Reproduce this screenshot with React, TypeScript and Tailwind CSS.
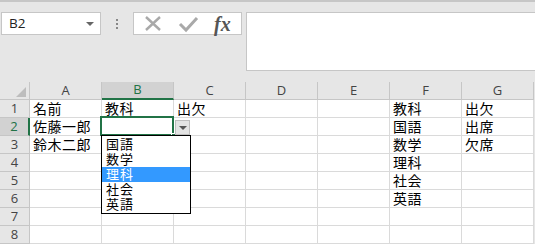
import React from "react";

const COLS = ["A", "B", "C", "D", "E", "F", "G"];

const CELLS: Record<string, string> = {
  A1: "名前",
  B1: "教科",
  C1: "出欠",
  F1: "教科",
  G1: "出欠",
  A2: "佐藤一郎",
  F2: "国語",
  G2: "出席",
  A3: "鈴木二郎",
  F3: "数学",
  G3: "欠席",
  F4: "理科",
  F5: "社会",
  F6: "英語",
};

const OPTIONS = ["国語", "数学", "理科", "社会", "英語"];

const jp = "font-['Liberation_Sans','Noto_Sans_CJK_JP',sans-serif]";
const ui = "font-['Open_Sans','Liberation_Sans',sans-serif]";

function FormulaBar() {
  return (
    <div className="flex h-[82px] items-start border-t-2 border-[#c6c6c6] pt-[10px]">
      <div className="ml-[1px] flex h-[23px] w-[100px] items-center justify-between border border-[#c6c6c6] bg-white pl-[7px] pr-[6px]">
        <span className={`${ui} text-[13.5px] text-[#222]`}>B2</span>
        <span className="h-0 w-0 border-x-[4px] border-t-[4px] border-x-transparent border-t-[#666]" />
      </div>
      <div className="flex h-[23px] w-[32px] flex-col items-center justify-center gap-[2px]">
        <span className="h-[2px] w-[2px] bg-[#888]" />
        <span className="h-[2px] w-[2px] bg-[#888]" />
        <span className="h-[2px] w-[2px] bg-[#888]" />
      </div>
      <div className="flex h-[23px] w-[109px] items-center border border-[#c6c6c6] bg-white">
        <svg width="36" height="21" viewBox="0 0 36 21" className="ml-[2px]">
          <path d="M10 4 L24 17 M24 4 L10 17" stroke="#a9a9a9" strokeWidth="2.4" fill="none" />
        </svg>
        <svg width="36" height="21" viewBox="0 0 36 21">
          <path d="M8 11 L14 17 L25 5" stroke="#a9a9a9" strokeWidth="3" fill="none" />
        </svg>
        <span className="ml-[6px] font-['Liberation_Serif',serif] text-[20px] font-bold italic leading-none text-[#555]">
          fx
        </span>
      </div>
      <div className="ml-[4px] h-[59px] flex-1 border border-r-0 border-[#c6c6c6] bg-white" />
    </div>
  );
}

function Sheet() {
  const rows = [1, 2, 3, 4, 5, 6, 7, 8];
  return (
    <div className="relative">
      <div className="flex h-[18px] bg-[#e6e6e6]">
        <div className="flex w-[30px] shrink-0 items-end justify-end border-r border-b border-[#c6c6c6] pb-[2px] pr-[3px]">
          <svg width="10" height="10" viewBox="0 0 10 10">
            <path d="M10 0 L10 10 L0 10 Z" fill="#bdbdbd" />
          </svg>
        </div>
        {COLS.map((c) => (
          <div
            key={c}
            className={`${ui} flex w-[72px] shrink-0 items-center justify-center text-[13px] ${
              c === "B"
                ? "border-b-2 border-r border-[#217346] border-r-[#c6c6c6] bg-[#d2d2d2] text-[#217346]"
                : "border-b border-r border-[#c6c6c6] text-[#444]"
            }`}
          >
            {c}
          </div>
        ))}
      </div>
      {rows.map((r) => (
        <div key={r} className="flex h-[18px]">
          <div
            className={`${ui} flex w-[30px] shrink-0 items-center justify-center text-[13px] ${
              r === 2
                ? "border-r-2 border-b border-[#217346] border-b-[#c6c6c6] bg-[#d2d2d2] text-[#217346]"
                : "border-r border-b border-[#c6c6c6] bg-[#e6e6e6] text-[#444]"
            }`}
          >
            {r}
          </div>
          {COLS.map((c) => (
            <div
              key={c}
              className={`${jp} w-[72px] shrink-0 whitespace-nowrap border-r border-b border-[#dadada] bg-white pl-[3px] pt-[1px] text-[14px] leading-[17px] tracking-[0.5px] text-black`}
            >
              {CELLS[c + r] ?? ""}
            </div>
          ))}
        </div>
      ))}

      {/* active cell B2 */}
      <div className="absolute left-[100px] top-[34px] h-[20px] w-[74px] border-2 border-[#217346]">
        <span className="absolute -bottom-[4px] -right-[4px] h-[5px] w-[5px] border border-white bg-[#217346]" />
      </div>

      {/* validation arrow */}
      <div className="absolute left-[175px] top-[38px] flex h-[15px] w-[15px] items-center justify-center border border-[#bdbdbd] bg-[#e3e3e3]">
        <span className="h-0 w-0 border-x-[4px] border-t-[4px] border-x-transparent border-t-[#555]" />
      </div>

      {/* validation list */}
      <div className="absolute left-[101px] top-[53px] w-[90px] border border-black bg-white py-[1px]">
        {OPTIONS.map((o) => (
          <div
            key={o}
            className={`${jp} flex h-[15px] items-center pl-[4px] text-[13px] leading-[15px] tracking-[1px] ${
              o === "理科" ? "bg-[#3399ff] text-white" : "text-black"
            }`}
          >
            {o}
          </div>
        ))}
      </div>
    </div>
  );
}

export default function App() {
  return (
    <div className="h-[244px] w-[535px] overflow-hidden bg-[#e6e6e6]">
      <FormulaBar />
      <Sheet />
    </div>
  );
}
